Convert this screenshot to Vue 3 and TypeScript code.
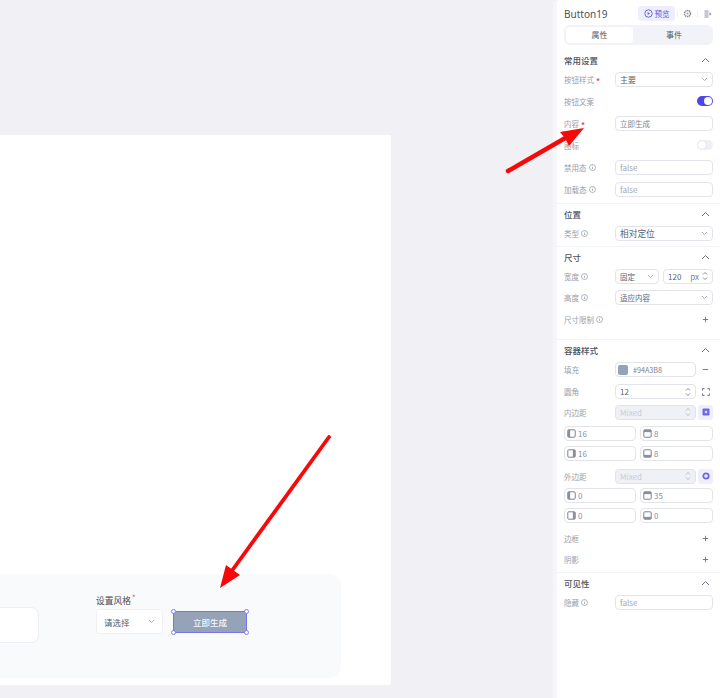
<script setup lang="ts">
type Side = 'l' | 't' | 'r' | 'b'
interface Mini { side: Side; value: string }
const paddingBoxes: Mini[] = [
  { side: 'l', value: '16' },
  { side: 't', value: '8' },
  { side: 'r', value: '16' },
  { side: 'b', value: '8' },
]
const marginBoxes: Mini[] = [
  { side: 'l', value: '0' },
  { side: 't', value: '35' },
  { side: 'r', value: '0' },
  { side: 'b', value: '0' },
]
const sideBars: Record<Side, { x: number; y: number; width: number; height: number }> = {
  l: { x: 1, y: 1, width: 2.5, height: 8 },
  t: { x: 1, y: 1, width: 8, height: 2.5 },
  r: { x: 6.5, y: 1, width: 2.5, height: 8 },
  b: { x: 1, y: 6.5, width: 8, height: 2.5 },
}
</script>

<template>
  <div class="root">
    <main class="canvas">
      <section class="page">
        <div class="card">
          <div class="textarea"></div>
          <div class="form-item">
            <div class="form-label">设置风格<span class="form-star">*</span></div>
            <div class="form-select">
              <span>请选择</span>
              <svg class="chev" width="7" height="5" viewBox="0 0 7 5"><path d="M1 1l2.500 2.500L6 1" /></svg>
            </div>
          </div>
          <button class="cta" type="button">
            立即生成
            <i class="handle tl"></i><i class="handle tr"></i><i class="handle bl"></i><i class="handle br"></i>
          </button>
        </div>
      </section>
    </main>

    <aside class="panel">
      <header class="head">
        <span class="name">Button19</span>
        <span class="preview">
          <svg width="9" height="9" viewBox="0 0 9 9"><circle cx="4.500" cy="4.500" r="3.700" fill="none" stroke="#5b5bd6" stroke-width=".9" /><path d="M3.600 2.900l2.300 1.600-2.300 1.600z" fill="#5b5bd6" /></svg>
          预览
        </span>
        <i class="sep first-sep"></i>
        <svg width="9" height="9" viewBox="0 0 9 9"><circle cx="4.500" cy="4.500" r="3" fill="none" stroke="#8b909c" stroke-width="1.600" stroke-dasharray="1.400 .5" /><circle cx="4.500" cy="4.500" r="1.100" fill="#a5aab4" /></svg>
        <i class="sep second-sep"></i>
        <svg width="8" height="8" viewBox="0 0 8 8"><path d="M.5 1h4M.5 3h4M.5 5h4M.5 7h4" stroke="#8b909c" fill="none" /><path d="M5.500 2.300L7.600 4 5.500 5.700z" fill="#8b909c" /></svg>
      </header>
      <div class="tabs">
        <span class="tab active">属性</span>
        <span class="tab">事件</span>
      </div>

      <section class="group first">
        <div class="title"><span>常用设置</span><svg class="up" width="9" height="6" viewBox="0 0 9 6"><path d="M1 5l3.500-3.500L8 5" /></svg></div>
        <div class="row"><label>按钮样式<b>*</b></label><div class="field"><span class="dark">主要</span><svg class="chev" width="7" height="5" viewBox="0 0 7 5"><path d="M1 1l2.500 2.500L6 1" /></svg></div></div>
        <div class="row"><label>按钮文案</label><span class="switch on"></span></div>
        <div class="row"><label>内容<b>*</b></label><div class="field"><span class="small mid">立即生成</span></div></div>
        <div class="row"><label>图标</label><span class="switch"></span></div>
        <div class="row"><label>禁用态<svg class="info" viewBox="0 0 7 7"><circle cx="3.500" cy="3.500" r="3" /><path d="M3.500 3v2M3.500 1.700v.7" /></svg></label><div class="field"><span>false</span></div></div>
        <div class="row"><label>加载态<svg class="info" viewBox="0 0 7 7"><circle cx="3.500" cy="3.500" r="3" /><path d="M3.500 3v2M3.500 1.700v.7" /></svg></label><div class="field"><span>false</span></div></div>
      </section>

      <section class="group">
        <div class="title"><span>位置</span><svg class="up" width="9" height="6" viewBox="0 0 9 6"><path d="M1 5l3.500-3.500L8 5" /></svg></div>
        <div class="row"><label>类型<svg class="info" viewBox="0 0 7 7"><circle cx="3.500" cy="3.500" r="3" /><path d="M3.500 3v2M3.500 1.700v.7" /></svg></label><div class="field"><span class="dark big">相对定位</span><svg class="chev" width="7" height="5" viewBox="0 0 7 5"><path d="M1 1l2.500 2.500L6 1" /></svg></div></div>
      </section>

      <section class="group size">
        <div class="title"><span>尺寸</span><svg class="up" width="9" height="6" viewBox="0 0 9 6"><path d="M1 5l3.500-3.500L8 5" /></svg></div>
        <div class="row compact"><label>宽度<svg class="info" viewBox="0 0 7 7"><circle cx="3.500" cy="3.500" r="3" /><path d="M3.500 3v2M3.500 1.700v.7" /></svg></label>
          <div class="pair">
            <div class="field"><span class="dark small">固定</span><svg class="chev" width="7" height="5" viewBox="0 0 7 5"><path d="M1 1l2.500 2.500L6 1" /></svg></div>
            <div class="field"><span class="dark">120</span><span class="unit">px</span><svg class="step" width="6" height="10" viewBox="0 0 6 10"><path d="M1 3.500L3 1.500 5 3.500M1 6.500L3 8.500 5 6.500" /></svg></div>
          </div>
        </div>
        <div class="row"><label>高度<svg class="info" viewBox="0 0 7 7"><circle cx="3.500" cy="3.500" r="3" /><path d="M3.500 3v2M3.500 1.700v.7" /></svg></label><div class="field"><span class="dark small">适应内容</span><svg class="chev" width="7" height="5" viewBox="0 0 7 5"><path d="M1 1l2.500 2.500L6 1" /></svg></div></div>
        <div class="row"><label>尺寸限制<svg class="info" viewBox="0 0 7 7"><circle cx="3.500" cy="3.500" r="3" /><path d="M3.500 3v2M3.500 1.700v.7" /></svg></label><svg class="plus" width="7" height="7" viewBox="0 0 7 7"><path d="M3.500 .8v5.400M.8 3.500h5.400" /></svg></div>
      </section>

      <section class="group styles">
        <div class="title"><span>容器样式</span><svg class="up" width="9" height="6" viewBox="0 0 9 6"><path d="M1 5l3.500-3.500L8 5" /></svg></div>
        <div class="row"><label>填充</label>
          <div class="with-side">
            <div class="field"><i class="swatch"></i><span class="hex">#94A3B8</span></div>
            <svg class="plus" width="7" height="7" viewBox="0 0 7 7"><path d="M.8 3.500h5.400" /></svg>
          </div>
        </div>
        <div class="row"><label>圆角</label>
          <div class="with-side">
            <div class="field"><span class="dark">12</span><svg class="step" width="6" height="10" viewBox="0 0 6 10"><path d="M1 3.500L3 1.500 5 3.500M1 6.500L3 8.500 5 6.500" /></svg></div>
            <svg class="corners" width="8" height="8" viewBox="0 0 8 8"><path d="M.6 2.500V.6h1.900M5.500.6h1.900v1.900M7.400 5.500v1.900H5.500M2.500 7.400H.6V5.500" /></svg>
          </div>
        </div>

        <div class="row compact inner-head"><label>内边距</label>
          <div class="with-side">
            <div class="field off"><span>Mixed</span><svg class="step" width="6" height="10" viewBox="0 0 6 10"><path d="M1 3.500L3 1.500 5 3.500M1 6.500L3 8.500 5 6.500" /></svg></div>
            <span class="link"><svg width="8" height="8" viewBox="0 0 8 8"><rect x=".5" y=".5" width="7" height="7" rx="1.200" fill="#6d66e0" /><rect x="2.800" y="2.800" width="2.400" height="2.400" fill="#d9d8fb" /></svg></span>
          </div>
        </div>
        <div class="minis inner">
          <div v-for="m in paddingBoxes" :key="m.side" class="mini">
            <svg width="9" height="9" viewBox="0 0 10 10"><rect x=".9" y=".9" width="8.200" height="8.200" rx="1" fill="none" stroke="#6f7480" stroke-width="1" /><rect v-bind="sideBars[m.side]" fill="#8b909c" /></svg>
            <span>{{ m.value }}</span>
          </div>
        </div>

        <div class="row compact outer-head"><label>外边距</label>
          <div class="with-side">
            <div class="field off"><span>Mixed</span><svg class="step" width="6" height="10" viewBox="0 0 6 10"><path d="M1 3.500L3 1.500 5 3.500M1 6.500L3 8.500 5 6.500" /></svg></div>
            <span class="link"><svg width="8" height="8" viewBox="0 0 8 8"><circle cx="4" cy="4" r="2.700" fill="none" stroke="#6d66e0" stroke-width="1.800" /></svg></span>
          </div>
        </div>
        <div class="minis outer">
          <div v-for="m in marginBoxes" :key="m.side" class="mini">
            <svg width="9" height="9" viewBox="0 0 10 10"><rect x=".9" y=".9" width="8.200" height="8.200" rx="1" fill="none" stroke="#6f7480" stroke-width="1" /><rect v-bind="sideBars[m.side]" fill="#8b909c" /></svg>
            <span>{{ m.value }}</span>
          </div>
        </div>

        <div class="row border-row"><label>边框</label><svg class="plus" width="7" height="7" viewBox="0 0 7 7"><path d="M3.500 .8v5.400M.8 3.500h5.400" /></svg></div>
        <div class="row compact"><label>阴影</label><svg class="plus" width="7" height="7" viewBox="0 0 7 7"><path d="M3.500 .8v5.400M.8 3.500h5.400" /></svg></div>
      </section>

      <section class="group">
        <div class="title"><span>可见性</span><svg class="up" width="9" height="6" viewBox="0 0 9 6"><path d="M1 5l3.500-3.500L8 5" /></svg></div>
        <div class="row"><label>隐藏<svg class="info" viewBox="0 0 7 7"><circle cx="3.500" cy="3.500" r="3" /><path d="M3.500 3v2M3.500 1.700v.7" /></svg></label><div class="field"><span>false</span></div></div>
      </section>
    </aside>

    <svg class="arrows" width="720" height="698" viewBox="0 0 720 698">
      <path d="M508 171L567 137" stroke="#f80808" stroke-width="4.500" stroke-linecap="round" fill="none" />
      <path d="M584 128L560 132L565 138L569 146Z" fill="#f80808" />
      <path d="M329 437L231 572" stroke="#f80808" stroke-width="3.800" stroke-linecap="round" fill="none" />
      <path d="M220 588L226 565L233 570L240 575Z" fill="#f80808" />
    </svg>
  </div>
</template>

<style>
html, body { margin: 0; padding: 0; background: #f0f0f5; }
</style>

<style scoped>
.root {
  position: relative;
  display: flex;
  width: 720px;
  height: 698px;
  overflow: hidden;
  background: #f0f0f5;
  font-family: "Noto Sans CJK SC", "Noto Sans", sans-serif;
}
.canvas {
  flex: 1;
  min-width: 0;
  padding-top: 135px;
}
.page {
  display: flex;
  flex-direction: column;
  justify-content: flex-end;
  box-sizing: border-box;
  width: 391px;
  height: 550px;
  padding-bottom: 7px;
  background: #fff;
  overflow: hidden;
}
.card {
  display: flex;
  align-items: flex-start;
  box-sizing: border-box;
  width: 361px;
  height: 104px;
  margin-left: -20px;
  background: #f9fafc;
  border-radius: 11px;
}
.textarea {
  box-sizing: border-box;
  width: 59px;
  height: 36px;
  margin: 33px 57px 0 0;
  background: #fff;
  border: 1px solid #eceef3;
  border-radius: 8px;
}
.form-item { margin: 15px 10px 0 0; }
.form-label {
  height: 20px;
  line-height: 17px;
  font-size: 8.750px;
  color: #444a55;
}
.form-star { color: #ef4444; font-size: 8px; margin-left: 1px; vertical-align: 3px; }
.form-select {
  display: flex;
  align-items: center;
  justify-content: space-between;
  box-sizing: border-box;
  width: 67px;
  height: 25px;
  padding: 0 7px;
  background: #fff;
  border: 1px solid #f0f1f5;
  border-radius: 3px;
  font-size: 8.500px;
  color: #555b66;
}
.cta {
  position: relative;
  box-sizing: border-box;
  width: 74px;
  height: 22px;
  margin-top: 37px;
  padding: 0;
  background: #94a3b8;
  border: 1px solid #7a72ea;
  color: #f4f6fa;
  font: inherit;
  font-size: 8.500px;
  font-weight: 500;
}
.handle {
  position: absolute;
  box-sizing: border-box;
  width: 5px;
  height: 5px;
  background: #fff;
  border: 1px solid #8079ee;
  border-radius: 50%;
}
.tl { left: -3px; top: -3px; }
.tr { right: -3px; top: -3px; }
.bl { left: -3px; bottom: -3px; }
.br { right: -3px; bottom: -3px; }

.panel {
  box-sizing: border-box;
  flex: none;
  width: 167px;
  height: 698px;
  background: #fff;
  border-left: 4px solid #f5f5fa;
  border-top-left-radius: 6px;
  padding-top: 2px;
  color: #9298a3;
}
.head {
  display: flex;
  align-items: center;
  height: 23px;
  padding: 0 8px 0 7px;
}
.name { flex: 1; font-size: 10px; color: #4b5160; font-family: "Noto Sans", sans-serif; }
.preview {
  display: flex;
  align-items: center;
  justify-content: center;
  gap: 2px;
  width: 37px;
  height: 15px;
  border-radius: 4px;
  background: #eeeefd;
  color: #5b5bd6;
  font-size: 7.500px;
}
.sep { width: 1px; height: 6px; background: #eceef2; }
.first-sep { margin: 0 5px 0 2px; }
.second-sep { margin: 0 6px 0 5px; }
.tabs {
  display: flex;
  box-sizing: border-box;
  height: 20px;
  margin: 0 7px;
  padding: 2px;
  background: #f2f3f8;
  border-radius: 6px;
}
.tab {
  flex: 1;
  padding-left: 4px;
  line-height: 16px;
  text-align: center;
  font-size: 8px;
  color: #555b66;
  border-radius: 4px;
}
.tab.active { flex: none; width: 67px; padding-left: 0; background: #fff; }
.group {
  padding: 1.500px 7px;
  border-bottom: 1px solid #f3f4f7;
}
.group:last-child { border-bottom: 0; }
.group.first { padding-top: 6px; padding-bottom: 3px; }
.group.size { padding-bottom: 8.500px; }
.group.styles { padding-bottom: 2px; }
.title {
  display: flex;
  align-items: center;
  justify-content: space-between;
  height: 17px;
  font-size: 8.500px;
  font-weight: 500;
  color: #4b5160;
}
.up { margin-right: 3px; }
.up path { fill: none; stroke: #6a7080; stroke-width: 1; }
.row {
  display: flex;
  align-items: center;
  justify-content: space-between;
  height: 22px;
  font-size: 7.500px;
}
.row.compact { height: 21px; }
.inner-head { margin-top: -1px; }
.outer-head { margin-top: 5px; }
.border-row { margin-top: 4.500px; }
.row label {
  display: flex;
  align-items: center;
  color: #989ea9;
}
.row label b { margin: 3px 0 0 2px; color: #ef4444; font-size: 8px; font-weight: 700; }
.info {
  width: 7px;
  height: 7px;
  margin-left: 2px;
  fill: none;
  stroke: #8f95a0;
  stroke-width: .7;
}
.field {
  display: flex;
  flex: none;
  align-items: center;
  justify-content: space-between;
  box-sizing: border-box;
  width: 98px;
  height: 15px;
  padding: 0 4px;
  background: #fff;
  border: 1px solid #e2e4ea;
  border-radius: 4px;
  font-size: 8px;
  color: #a0a6b0;
}
.dark { color: #5d6370; }
.mid { color: #7d8390; }
.small { font-size: 7.500px; }
.big { font-size: 8.700px; }
.chev path { fill: none; stroke: #a5aab4; stroke-width: .9; }
.step path { fill: none; stroke: #6a7080; stroke-width: .8; }
.plus path { fill: none; stroke: #6a7080; stroke-width: .9; }
.plus { margin-right: 4px; }
.corners path { fill: none; stroke: #6a7080; stroke-width: 1; }
.corners { margin-right: 3px; }
.pair { display: flex; gap: 4px; }
.pair .field { width: 44px; }
.pair .field + .field { width: 50px; padding-right: 4px; }
.unit { margin-left: auto; margin-right: 3px; color: #7d8390; }
.with-side {
  display: flex;
  align-items: center;
  justify-content: space-between;
  width: 98px;
}
.with-side .field { width: 81px; }
.swatch { flex: none; width: 10px; height: 10px; margin-left: -2px; background: #94a3b8; border-radius: 2px; }
.hex { flex: 1; margin-left: 5px; font-size: 7.200px; color: #7d8390; }
.field.off { background: #f0f1f6; border-color: #e2e4ea; color: #c8ccd6; }
.field.off .step path { stroke: #aab0ba; }
.link {
  display: flex;
  align-items: center;
  justify-content: center;
  width: 15px;
  height: 15px;
  background: #eeeefd;
  border-radius: 3px;
}
.minis {
  display: grid;
  grid-template-columns: 72px 73px;
  justify-content: space-between;
  row-gap: 5px;
}
.minis.inner { margin-top: 3px; }
.minis.outer { margin-top: 1px; }
.mini {
  display: flex;
  align-items: center;
  gap: 2px;
  box-sizing: border-box;
  height: 15px;
  padding: 0 2px;
  background: #fff;
  border: 1px solid #e2e4ea;
  border-radius: 4px;
  font-size: 8px;
  color: #8a909c;
}
.switch {
  position: relative;
  width: 16px;
  height: 10px;
  background: #eef0f8;
  border-radius: 5px;
}
.switch::after {
  content: "";
  position: absolute;
  left: 1px;
  top: 1px;
  width: 8px;
  height: 8px;
  background: #fff;
  border-radius: 50%;
  box-shadow: 0 0 1px #b8bcc8;
}
.switch.on { background: #4f46e5; }
.switch.on::after { left: auto; right: 1px; box-shadow: none; }
.arrows {
  position: absolute;
  left: 0;
  top: 0;
  pointer-events: none;
}
</style>
